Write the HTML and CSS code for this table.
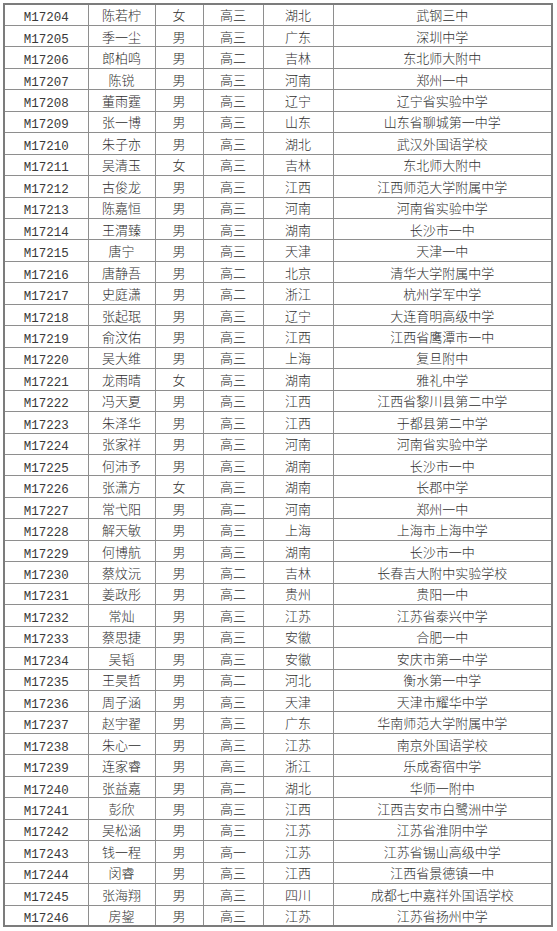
FILE: index.html
```html
<!DOCTYPE html>
<html lang="zh">
<head>
<meta charset="utf-8">
<title>名单</title>
<link rel="stylesheet" href="styles.css">
</head>
<body>
<table class="roster">
<colgroup>
<col class="c-id"><col class="c-name"><col class="c-sex"><col class="c-grade"><col class="c-prov"><col class="c-school">
</colgroup>
<tbody>
<tr><td class="id">M17204</td><td>陈若柠</td><td>女</td><td>高三</td><td>湖北</td><td>武钢三中</td></tr>
<tr><td class="id">M17205</td><td>季一尘</td><td>男</td><td>高三</td><td>广东</td><td>深圳中学</td></tr>
<tr><td class="id">M17206</td><td>郎柏鸣</td><td>男</td><td>高二</td><td>吉林</td><td>东北师大附中</td></tr>
<tr><td class="id">M17207</td><td>陈锐</td><td>男</td><td>高三</td><td>河南</td><td>郑州一中</td></tr>
<tr><td class="id">M17208</td><td>董雨霆</td><td>男</td><td>高三</td><td>辽宁</td><td>辽宁省实验中学</td></tr>
<tr><td class="id">M17209</td><td>张一博</td><td>男</td><td>高三</td><td>山东</td><td>山东省聊城第一中学</td></tr>
<tr><td class="id">M17210</td><td>朱子亦</td><td>男</td><td>高三</td><td>湖北</td><td>武汉外国语学校</td></tr>
<tr><td class="id">M17211</td><td>吴清玉</td><td>女</td><td>高三</td><td>吉林</td><td>东北师大附中</td></tr>
<tr><td class="id">M17212</td><td>古俊龙</td><td>男</td><td>高三</td><td>江西</td><td>江西师范大学附属中学</td></tr>
<tr><td class="id">M17213</td><td>陈嘉恒</td><td>男</td><td>高三</td><td>河南</td><td>河南省实验中学</td></tr>
<tr><td class="id">M17214</td><td>王渭臻</td><td>男</td><td>高三</td><td>湖南</td><td>长沙市一中</td></tr>
<tr><td class="id">M17215</td><td>唐宁</td><td>男</td><td>高三</td><td>天津</td><td>天津一中</td></tr>
<tr><td class="id">M17216</td><td>唐静吾</td><td>男</td><td>高二</td><td>北京</td><td>清华大学附属中学</td></tr>
<tr><td class="id">M17217</td><td>史庭潇</td><td>男</td><td>高二</td><td>浙江</td><td>杭州学军中学</td></tr>
<tr><td class="id">M17218</td><td>张起珉</td><td>男</td><td>高三</td><td>辽宁</td><td>大连育明高级中学</td></tr>
<tr><td class="id">M17219</td><td>俞汶佑</td><td>男</td><td>高三</td><td>江西</td><td>江西省鹰潭市一中</td></tr>
<tr><td class="id">M17220</td><td>吴大维</td><td>男</td><td>高三</td><td>上海</td><td>复旦附中</td></tr>
<tr><td class="id">M17221</td><td>龙雨晴</td><td>女</td><td>高三</td><td>湖南</td><td>雅礼中学</td></tr>
<tr><td class="id">M17222</td><td>冯天夏</td><td>男</td><td>高三</td><td>江西</td><td>江西省黎川县第二中学</td></tr>
<tr><td class="id">M17223</td><td>朱泽华</td><td>男</td><td>高三</td><td>江西</td><td>于都县第二中学</td></tr>
<tr><td class="id">M17224</td><td>张家祥</td><td>男</td><td>高三</td><td>河南</td><td>河南省实验中学</td></tr>
<tr><td class="id">M17225</td><td>何沛予</td><td>男</td><td>高三</td><td>湖南</td><td>长沙市一中</td></tr>
<tr><td class="id">M17226</td><td>张潇方</td><td>女</td><td>高三</td><td>湖南</td><td>长郡中学</td></tr>
<tr><td class="id">M17227</td><td>常弋阳</td><td>男</td><td>高二</td><td>河南</td><td>郑州一中</td></tr>
<tr><td class="id">M17228</td><td>解天敏</td><td>男</td><td>高三</td><td>上海</td><td>上海市上海中学</td></tr>
<tr><td class="id">M17229</td><td>何博航</td><td>男</td><td>高三</td><td>湖南</td><td>长沙市一中</td></tr>
<tr><td class="id">M17230</td><td>蔡炆沅</td><td>男</td><td>高二</td><td>吉林</td><td>长春吉大附中实验学校</td></tr>
<tr><td class="id">M17231</td><td>姜政彤</td><td>男</td><td>高二</td><td>贵州</td><td>贵阳一中</td></tr>
<tr><td class="id">M17232</td><td>常灿</td><td>男</td><td>高三</td><td>江苏</td><td>江苏省泰兴中学</td></tr>
<tr><td class="id">M17233</td><td>蔡思捷</td><td>男</td><td>高三</td><td>安徽</td><td>合肥一中</td></tr>
<tr><td class="id">M17234</td><td>吴韬</td><td>男</td><td>高三</td><td>安徽</td><td>安庆市第一中学</td></tr>
<tr><td class="id">M17235</td><td>王昊哲</td><td>男</td><td>高二</td><td>河北</td><td>衡水第一中学</td></tr>
<tr><td class="id">M17236</td><td>周子涵</td><td>男</td><td>高三</td><td>天津</td><td>天津市耀华中学</td></tr>
<tr><td class="id">M17237</td><td>赵宇翟</td><td>男</td><td>高三</td><td>广东</td><td>华南师范大学附属中学</td></tr>
<tr><td class="id">M17238</td><td>朱心一</td><td>男</td><td>高三</td><td>江苏</td><td>南京外国语学校</td></tr>
<tr><td class="id">M17239</td><td>连家睿</td><td>男</td><td>高三</td><td>浙江</td><td>乐成寄宿中学</td></tr>
<tr><td class="id">M17240</td><td>张益嘉</td><td>男</td><td>高二</td><td>湖北</td><td>华师一附中</td></tr>
<tr><td class="id">M17241</td><td>彭欣</td><td>男</td><td>高三</td><td>江西</td><td>江西吉安市白鹭洲中学</td></tr>
<tr><td class="id">M17242</td><td>吴松涵</td><td>男</td><td>高三</td><td>江苏</td><td>江苏省淮阴中学</td></tr>
<tr><td class="id">M17243</td><td>钱一程</td><td>男</td><td>高一</td><td>江苏</td><td>江苏省锡山高级中学</td></tr>
<tr><td class="id">M17244</td><td>闵睿</td><td>男</td><td>高三</td><td>江西</td><td>江西省景德镇一中</td></tr>
<tr><td class="id">M17245</td><td>张海翔</td><td>男</td><td>高三</td><td>四川</td><td>成都七中嘉祥外国语学校</td></tr>
<tr><td class="id">M17246</td><td>房鋆</td><td>男</td><td>高三</td><td>江苏</td><td>江苏省扬州中学</td></tr>
</tbody>
</table>
</body>
</html>
```

FILE: styles.css
```css
html, body {
  margin: 0;
  padding: 0;
  background: #ffffff;
}

body {
  padding: 3px 0 0 3px;
  font-family: "Noto Sans CJK SC", "Noto Sans", sans-serif;
  color: #2e2e2e;
}

.roster {
  border-collapse: collapse;
  table-layout: fixed;
  width: 548px;
  border: 2px solid #7c7c7c;
}

.c-id { width: 84px; }
.c-name { width: 67px; }
.c-sex { width: 48px; }
.c-grade { width: 60px; }
.c-prov { width: 70px; }
.c-school { width: 219px; }

.roster tr {
  height: 21.46px;
}

.roster td {
  border: 1px solid #8e8e8e;
  padding: 0;
  text-align: center;
  vertical-align: middle;
  font-size: 13px;
  font-weight: 300;
  line-height: 19px;
  white-space: nowrap;
  overflow: hidden;
}

.roster td.id {
  font-family: "Liberation Mono", "DejaVu Sans Mono", monospace;
  font-size: 12.5px;
  font-weight: 400;
  color: #3a3a3a;
  line-height: 12px;
  padding-top: 7px;
}
```
